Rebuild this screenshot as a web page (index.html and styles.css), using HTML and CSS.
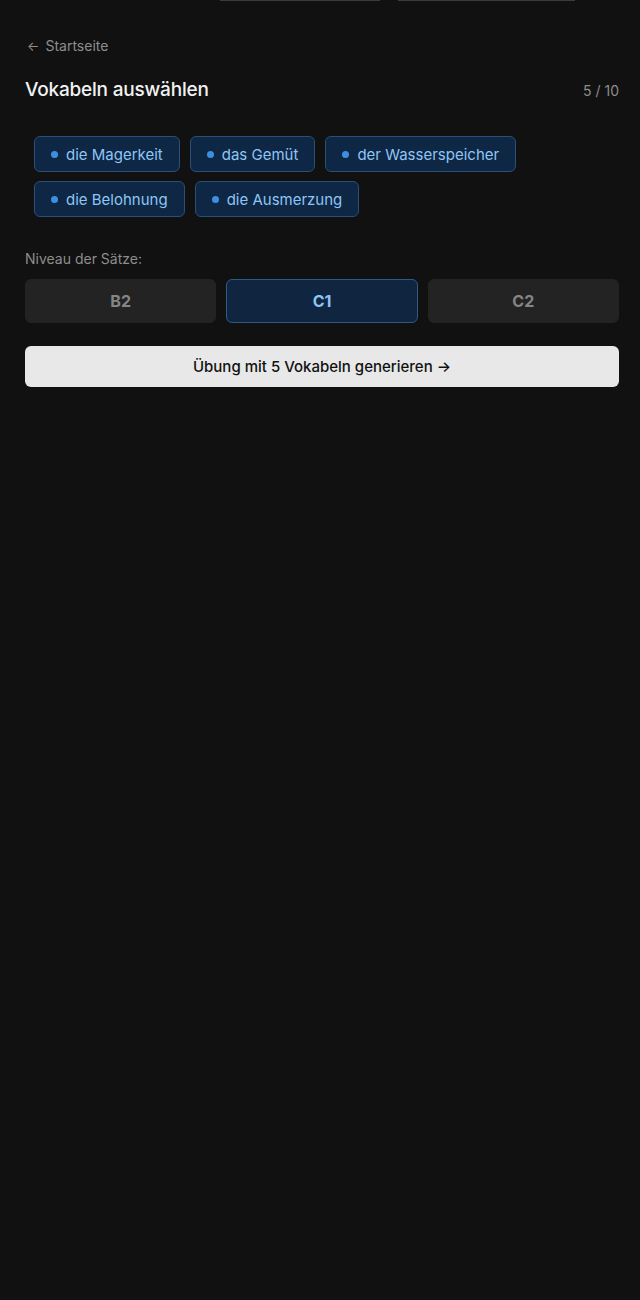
FILE: index.html
```html
<!DOCTYPE html>
<html lang="de">
<head>
<meta charset="utf-8">
<title>Vokabeln auswählen</title>
<link rel="stylesheet" href="styles.css">
</head>
<body>
<div class="topbar">
  <div class="top-tab top-tab-a"></div>
  <div class="top-tab top-tab-b"></div>
</div>
<main class="page">
  <a class="back" href="#"><span class="arrow">←</span>Startseite</a>
  <div class="header">
    <h1 class="title">Vokabeln auswählen</h1>
    <span class="count">5 / 10</span>
  </div>
  <div class="chips">
    <span class="chip"><span class="dot"></span>die Magerkeit</span>
    <span class="chip"><span class="dot"></span>das Gemüt</span>
    <span class="chip"><span class="dot"></span>der Wasserspeicher</span>
    <span class="chip"><span class="dot"></span>die Belohnung</span>
    <span class="chip"><span class="dot"></span>die Ausmerzung</span>
  </div>
  <div class="label">Niveau der Sätze:</div>
  <div class="levels">
    <button class="level">B2</button>
    <button class="level level-active">C1</button>
    <button class="level">C2</button>
  </div>
  <button class="generate">Übung mit 5 Vokabeln generieren →</button>
</main>
</body>
</html>
```
FILE: styles.css
```css
html, body {
  margin: 0;
  padding: 0;
  background: #111111;
}
body {
  font-family: Inter, "Noto Sans", "Liberation Sans", sans-serif;
  color: #eeeeee;
  min-height: 1300px;
}
.topbar {
  display: flex;
  height: 1px;
  padding-left: 220px;
  gap: 18px;
}
.top-tab {
  height: 1px;
  background: #3c3c3c;
}
.top-tab-a { width: 160px; }
.top-tab-b { width: 177px; }
.page {
  padding: 0 21px 0 25px;
}
.back {
  display: inline-flex;
  align-items: center;
  margin-top: 36px;
  font-size: 14px;
  line-height: 18px;
  color: #8d8d8d;
  text-decoration: none;
}
.arrow {
  font-size: 13px;
  margin: 0 6px 0 2px;
}
.header {
  display: flex;
  justify-content: space-between;
  align-items: center;
  margin-top: 23px;
}
.title {
  margin: 0;
  font-size: 19px;
  line-height: 24px;
  font-weight: 500;
  color: #f2f2f2;
  letter-spacing: -0.2px;
}
.count {
  font-size: 14px;
  color: #8d8d8d;
}
.chips {
  display: flex;
  flex-wrap: wrap;
  gap: 9px 10px;
  padding: 0 9px;
  margin-top: 34px;
}
.chip {
  display: inline-flex;
  align-items: center;
  height: 34px;
  padding: 0 16px 0 16px;
  border: 1px solid #2b4f78;
  border-radius: 6px;
  background: #0e2744;
  color: #8ec5f5;
  font-size: 15px;
}
.dot {
  width: 7px;
  height: 7px;
  border-radius: 50%;
  background: #3d8fe0;
  margin-right: 8px;
}
.label {
  margin-top: 33px;
  font-size: 14px;
  line-height: 18px;
  color: #8d8d8d;
}
.levels {
  display: grid;
  grid-template-columns: 1fr 1fr 1fr;
  gap: 10px;
  margin-top: 11px;
}
.level {
  height: 44px;
  border: 1px solid #232323;
  border-radius: 6px;
  background: #232323;
  color: #858585;
  font-family: inherit;
  font-size: 16px;
  font-weight: 700;
}
.level-active {
  background: #10253f;
  border-color: #2f5a88;
  color: #8ec5f5;
}
.generate {
  display: block;
  width: 100%;
  height: 41px;
  margin-top: 23px;
  border: none;
  border-radius: 6px;
  background: #e8e8e8;
  color: #111111;
  font-family: inherit;
  font-size: 15px;
  font-weight: 500;
}
```
